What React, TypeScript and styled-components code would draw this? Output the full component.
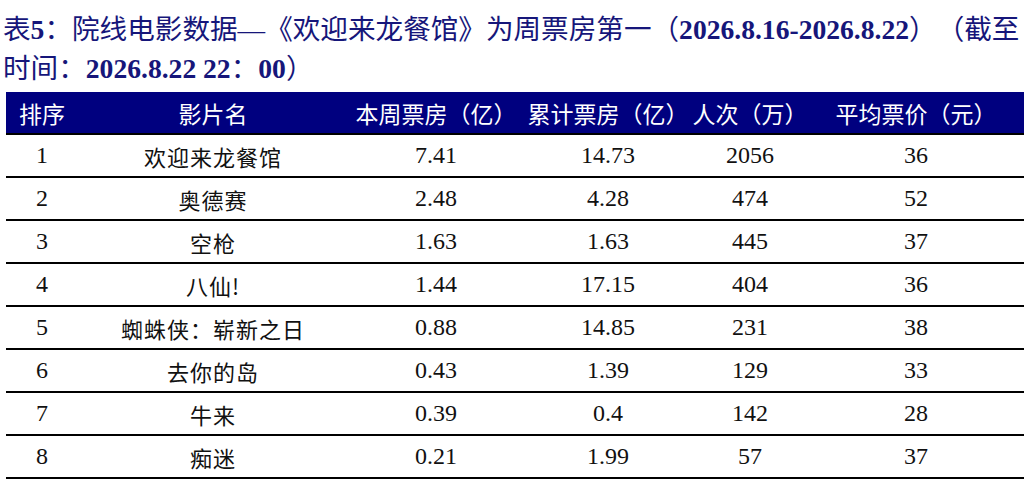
import React from "react";
import styled, { createGlobalStyle } from "styled-components";

const GlobalStyle = createGlobalStyle`
  html, body {
    margin: 0;
    padding: 0;
    background: #ffffff;
  }
  body {
    font-family: "Liberation Serif", "Noto Sans CJK SC", serif;
    text-spacing-trim: space-all;
  }
`;

const Page = styled.div`
  width: 1030px;
  height: 490px;
  box-sizing: border-box;
  padding: 10px 6px 0 3px;
`;

const Title = styled.h1`
  margin: 0 0 4px;
  font-family: "Liberation Serif", "Noto Sans CJK SC", serif;
  font-size: 27.6px;
  font-weight: normal;
  line-height: 39px;
  color: #16167a;
  white-space: nowrap;

  b {
    font-weight: bold;
  }
`;

const Table = styled.div`
  margin-left: 3px;
  display: grid;
  grid-template-columns: 72px 270px 176px 168px 116px 1fr;
`;

const HeadCell = styled.div`
  height: 41px;
  display: flex;
  align-items: center;
  justify-content: center;
  background: #00007f;
  color: #ffffff;
  font-family: "Noto Sans CJK SC", sans-serif;
  font-size: 23px;
  white-space: nowrap;
  border-bottom: 2px solid #000000;
`;

const Cell = styled.div<{ $cjk?: boolean }>`
  height: 41px;
  display: flex;
  align-items: center;
  justify-content: center;
  color: #111111;
  font-family: ${(p) =>
    p.$cjk
      ? `"Noto Sans CJK SC", sans-serif`
      : `"Liberation Serif", "Noto Sans CJK SC", serif`};
  font-size: ${(p) => (p.$cjk ? "22px" : "24px")};
  letter-spacing: ${(p) => (p.$cjk ? "1px" : "0")};
  white-space: nowrap;
  border-bottom: 2px solid #000000;
`;

const headers = [
  "排序",
  "影片名",
  "本周票房（亿）",
  "累计票房（亿）",
  "人次（万）",
  "平均票价（元）",
];

type Film = {
  rank: number;
  name: string;
  week: string;
  total: string;
  people: string;
  price: string;
};

const films: Film[] = [
  { rank: 1, name: "欢迎来龙餐馆", week: "7.41", total: "14.73", people: "2056", price: "36" },
  { rank: 2, name: "奥德赛", week: "2.48", total: "4.28", people: "474", price: "52" },
  { rank: 3, name: "空枪", week: "1.63", total: "1.63", people: "445", price: "37" },
  { rank: 4, name: "八仙!", week: "1.44", total: "17.15", people: "404", price: "36" },
  { rank: 5, name: "蜘蛛侠：崭新之日", week: "0.88", total: "14.85", people: "231", price: "38" },
  { rank: 6, name: "去你的岛", week: "0.43", total: "1.39", people: "129", price: "33" },
  { rank: 7, name: "牛来", week: "0.39", total: "0.4", people: "142", price: "28" },
  { rank: 8, name: "痴迷", week: "0.21", total: "1.99", people: "57", price: "37" },
];

export default function App() {
  return (
    <>
      <GlobalStyle />
      <Page>
        <Title>
          表<b>5</b>：院线电影数据—《欢迎来龙餐馆》为周票房第一（
          <b>2026.8.16-2026.8.22</b>）（截至
          <br />
          时间：<b>2026.8.22 22</b>：<b>00</b>）
        </Title>
        <Table>
          {headers.map((h) => (
            <HeadCell key={h}>{h}</HeadCell>
          ))}
          {films.map((f) => (
            <React.Fragment key={f.rank}>
              <Cell>{f.rank}</Cell>
              <Cell $cjk>{f.name}</Cell>
              <Cell>{f.week}</Cell>
              <Cell>{f.total}</Cell>
              <Cell>{f.people}</Cell>
              <Cell>{f.price}</Cell>
            </React.Fragment>
          ))}
        </Table>
      </Page>
    </>
  );
}
